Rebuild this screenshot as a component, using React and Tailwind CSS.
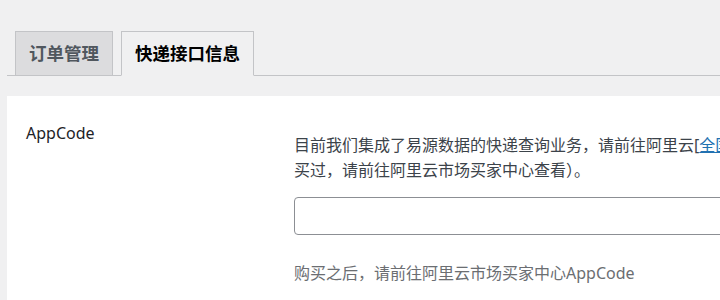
const tabs = [
  { id: "order", label: "订单管理" },
  { id: "express", label: "快递接口信息" },
];

const App = () => {
  const active = "express";
  return (
    <div
      className="w-[720px] h-[300px] overflow-hidden bg-[#f0f0f1] text-[#3c434a]"
      style={{ fontFamily: "'Noto Sans', 'Noto Sans CJK SC', sans-serif" }}
    >
      {/* tabs */}
      <div className="ml-[7px] mt-[31px] pl-[8px] flex gap-[8px] border-b border-[#c3c4c7]">
        {tabs.map((tab) =>
          <div
            key={tab.id}
            className={
              tab.id === active
                ? "-mb-px h-[45px] px-[13px] flex items-center border border-[#c3c4c7] border-b-[#f0f0f1] bg-[#f0f0f1] text-black text-[17.5px] font-bold"
                : "-mb-px h-[45px] px-[13px] flex items-center border border-[#c3c4c7] bg-[#dcdcde] text-[#50575e] text-[17.5px] font-bold"
            }
          >
            {tab.label}
          </div>
        )}
      </div>

      {/* settings panel */}
      <div className="ml-[7px] mt-[20px] bg-white h-[300px] flex">
        <div className="w-[287px] shrink-0 pl-[19px] pt-[25px] text-[16px] leading-[24px] text-[#1d2327]">
          AppCode
        </div>
        <div className="pt-[37px] text-[16px] leading-[24px]">
          <p className="whitespace-nowrap">
            目前我们集成了易源数据的快递查询业务，请前往阿里云[<a className="text-[#2271b1] underline" href="#">全国快递物流查询</a>]购买
          </p>
          <p className="whitespace-nowrap">
            买过，请前往阿里云市场买家中心查看<span style={{ fontFamily: "'Noto Sans CJK SC', sans-serif" }}>）。</span>
          </p>
          <input
            type="text"
            className="mt-[15px] block w-[600px] h-[38px] rounded-[4px] border border-[#8c8f94] bg-white"
          />
          <p className="mt-[26px] text-[#6b6e72] whitespace-nowrap">购买之后，请前往阿里云市场买家中心AppCode</p>
        </div>
      </div>
    </div>
  );
};

export default App;
